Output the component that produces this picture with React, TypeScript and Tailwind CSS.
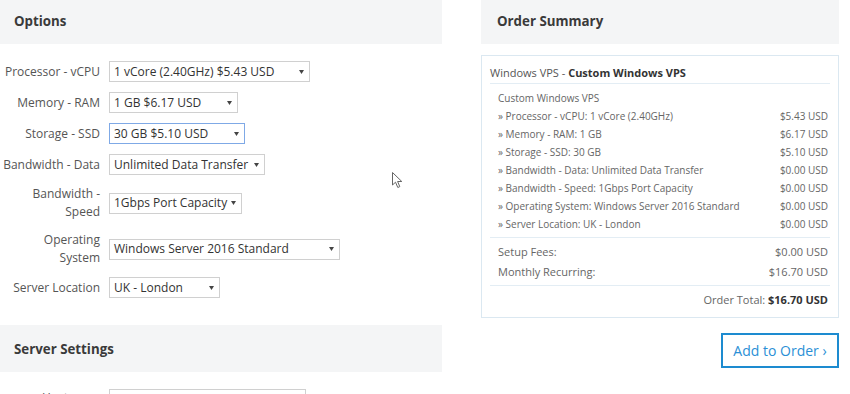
const options = [
  { label: ["Processor - vCPU"], value: "1 vCore (2.40GHz) $5.43 USD", w: "w-[201px]" },
  { label: ["Memory - RAM"], value: "1 GB $6.17 USD", w: "w-[129px]" },
  { label: ["Storage - SSD"], value: "30 GB $5.10 USD", w: "w-[136px]", focus: true },
  { label: ["Bandwidth - Data"], value: "Unlimited Data Transfer", w: "w-[156px]" },
  { label: ["Bandwidth -", "Speed"], value: "1Gbps Port Capacity", w: "w-[133px]" },
  { label: ["Operating", "System"], value: "Windows Server 2016 Standard", w: "w-[231px]" },
  { label: ["Server Location"], value: "UK - London", w: "w-[111px]" },
];

const items = [
  ["» Processor - vCPU: 1 vCore (2.40GHz)", "$5.43 USD"],
  ["» Memory - RAM: 1 GB", "$6.17 USD"],
  ["» Storage - SSD: 30 GB", "$5.10 USD"],
  ["» Bandwidth - Data: Unlimited Data Transfer", "$0.00 USD"],
  ["» Bandwidth - Speed: 1Gbps Port Capacity", "$0.00 USD"],
  ["» Operating System: Windows Server 2016 Standard", "$0.00 USD"],
  ["» Server Location: UK - London", "$0.00 USD"],
];

const Caret = () => (
  <svg width="5" height="4" viewBox="0 0 5 4" className="shrink-0">
    <path d="M0 0 H5 L2.5 4 Z" fill="#444" />
  </svg>
);

const SelectBox = ({ value, w, focus }: { value: string; w: string; focus?: boolean }) => (
  <div
    className={`${w} h-[21px] flex items-center justify-between pl-1 pr-[5px] bg-white border text-[12px] text-[#333] whitespace-nowrap overflow-hidden ${
      focus ? "border-[#7fa9e6]" : "border-[#d0d0d0]"
    }`}
  >
    <span>{value}</span>
    <Caret />
  </div>
);

const SectionHeader = ({ title }: { title: string }) => (
  <div className="h-[47px] flex items-center pt-[2px] px-[14px] bg-[#f4f5f6] text-[13.3px] font-bold text-[#3a3a3a]">
    {title}
  </div>
);

const App = () => {
  return (
    <div className="relative w-[850px] h-[394px] overflow-hidden bg-white font-['Open_Sans',sans-serif]">
      <div className="flex mt-[-3px]">
        {/* Options column */}
        <div className="w-[442px] shrink-0">
          <SectionHeader title="Options" />
          <div className="pt-[17px] flex flex-col gap-[10px]">
            {options.map((o) => (
              <div key={o.value} className="flex items-center">
                <div className="w-[100px] text-right text-[12px] leading-[18px] text-[#555]">
                  {o.label.map((l) => (
                    <div key={l} className="whitespace-nowrap">
                      {l}
                    </div>
                  ))}
                </div>
                <div className="ml-[9px]">
                  <SelectBox value={o.value} w={o.w} focus={o.focus} />
                </div>
              </div>
            ))}
          </div>

          <div className="mt-[27px]">
            <SectionHeader title="Server Settings" />
            <div className="pt-[17px] flex items-start">
              <div className="w-[100px] text-right text-[12px] leading-[18px] text-[#555]">
                Hostname
              </div>
              <div className="ml-[9px] w-[197px] h-[21px] border border-[#d0d0d0] bg-white" />
            </div>
          </div>
        </div>

        {/* Order summary column */}
        <div className="ml-[39px] w-[358px] shrink-0">
          <div className="h-[47px] flex items-center pt-[2px] px-4 bg-[#f4f5f6] text-[13.3px] font-bold text-[#3a3a3a]">
            Order Summary
          </div>

          <div className="mt-[11px] border border-[#dbe8f1] px-2 text-[#666]">
            <div className="pt-[9px] pb-[2px] text-[11px] leading-[16px] text-[#555] border-b border-[#e3edf4]">
              Windows VPS - <span className="font-bold text-[#333]">Custom Windows VPS</span>
            </div>

            <div className="pt-[5px] pb-[4px] pl-2 pr-[2px] text-[10px] leading-[18px] border-b border-[#e3edf4]">
              <div>Custom Windows VPS</div>
              {items.map(([name, price]) => (
                <div key={name} className="flex justify-between">
                  <span>{name}</span>
                  <span>{price}</span>
                </div>
              ))}
            </div>

            <div className="pt-1 pb-[3px] pl-2 pr-[2px] text-[11px] leading-[20px] border-b border-[#e3edf4]">
              <div className="flex justify-between">
                <span>Setup Fees:</span>
                <span>$0.00 USD</span>
              </div>
              <div className="flex justify-between">
                <span>Monthly Recurring:</span>
                <span>$16.70 USD</span>
              </div>
            </div>

            <div className="pt-1 pb-[7px] pr-[2px] text-right text-[11px] leading-[20px]">
              Order Total: <span className="font-bold text-[#333]">$16.70 USD</span>
            </div>
          </div>

          <div className="mt-[15px] flex justify-end">
            <button className="w-[118px] h-[35px] border-2 border-[#1d8bd0] bg-white text-[14px] text-[#2b8fd6]">
              Add to Order ›
            </button>
          </div>
        </div>
      </div>

      {/* mouse pointer */}
      <svg
        className="absolute left-[392px] top-[172px]"
        width="12"
        height="17"
        viewBox="0 0 12 17"
      >
        <path
          d="M0.5 0.5 L0.5 13 L3.5 10.2 L5.8 15.5 L7.8 14.6 L5.6 9.5 L9.8 9.5 Z"
          fill="#fff"
          stroke="#666"
          strokeWidth="1"
          strokeLinejoin="round"
        />
      </svg>
    </div>
  );
};

export default App;
